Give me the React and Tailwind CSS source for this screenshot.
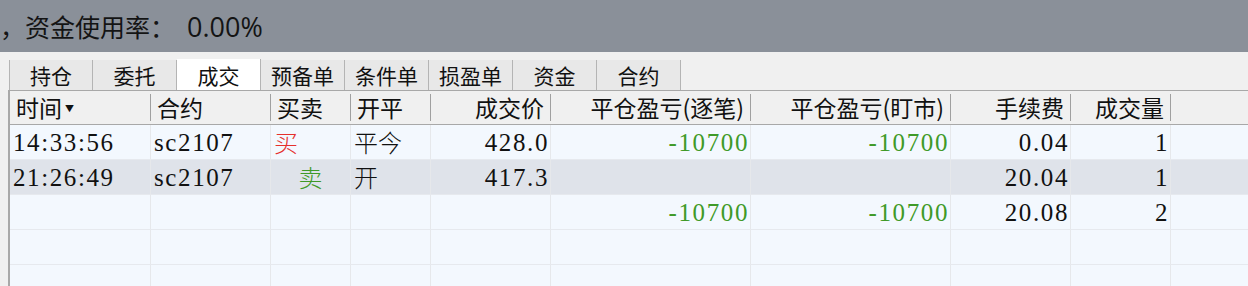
import React from "react";

const COLS = "grid grid-cols-[141px_120px_80px_80px_120px_200px_200px_120px_100px_1fr]";
const SANS = { fontFamily: '"Noto Sans CJK SC", "Noto Sans", sans-serif' };
const SERIF = { fontFamily: '"Liberation Serif", "Noto Sans CJK SC", serif' };

const tabs = ["持仓", "委托", "成交", "预备单", "条件单", "损盈单", "资金", "合约"];

const headers = [
  { t: "时间", a: "left", arrow: true },
  { t: "合约", a: "left" },
  { t: "买卖", a: "left" },
  { t: "开平", a: "left" },
  { t: "成交价", a: "right" },
  { t: "平仓盈亏(逐笔)", a: "right" },
  { t: "平仓盈亏(盯市)", a: "right" },
  { t: "手续费", a: "right" },
  { t: "成交量", a: "right" },
];

const GREEN = "text-[#3f9a28]";

const rows = [
  {
    bg: "bg-[#f3f8fe]",
    cells: [
      { t: "14:33:56", a: "left" },
      { t: "sc2107", a: "left" },
      { t: "买", a: "left", c: "text-[#e5302c]", cjk: true },
      { t: "平今", a: "left", cjk: true },
      { t: "428.0", a: "right" },
      { t: "-10700", a: "right", c: GREEN },
      { t: "-10700", a: "right", c: GREEN },
      { t: "0.04", a: "right" },
      { t: "1", a: "right" },
    ],
  },
  {
    bg: "bg-[#dfe3ea]",
    cells: [
      { t: "21:26:49", a: "left" },
      { t: "sc2107", a: "left" },
      { t: "卖", a: "center", c: "text-[#3f9a28]", cjk: true },
      { t: "开", a: "left", cjk: true },
      { t: "417.3", a: "right" },
      { t: "", a: "right" },
      { t: "", a: "right" },
      { t: "20.04", a: "right" },
      { t: "1", a: "right" },
    ],
  },
  {
    bg: "bg-[#f3f8fe]",
    cells: [
      { t: "", a: "left" },
      { t: "", a: "left" },
      { t: "", a: "left" },
      { t: "", a: "left" },
      { t: "", a: "right" },
      { t: "-10700", a: "right", c: GREEN },
      { t: "-10700", a: "right", c: GREEN },
      { t: "20.08", a: "right" },
      { t: "2", a: "right" },
    ],
  },
  { bg: "bg-[#f3f8fe]", cells: Array(9).fill({ t: "", a: "left" }) },
  { bg: "bg-[#f3f8fe]", cells: Array(9).fill({ t: "", a: "left" }) },
];

function alignCls(a) {
  if (a === "right") return "justify-end pr-[1px]";
  if (a === "center") return "justify-center";
  return "justify-start pl-[3px]";
}

export default function App() {
  return (
    <div className="w-[1248px] h-[286px] overflow-hidden bg-[#f0f0f0] text-[#111]">
      {/* top bar */}
      <div className="h-[52px] bg-[#8a9099] flex items-center whitespace-nowrap" style={SANS}>
        <span className="text-[25px] leading-none mt-[1px] text-[#141414]">
          ，资金使用率：
          <span
            className="ml-[12px] text-[27px]"
            style={{ fontFamily: '"Open Sans", "Noto Sans", sans-serif' }}
          >
            0.00%
          </span>
        </span>
      </div>

      {/* tabs */}
      <div className="h-[38px] pt-[7px] pl-[9px] flex">
        {tabs.map((t, i) => {
          const active = i === 2;
          return (
            <div
              key={t}
              className={
                "w-[84px] flex items-center justify-center text-[21px] leading-none border-r border-[#b4b4b4] " +
                (i === 0 ? "border-l " : "") +
                (active ? "bg-white h-[31px]" : "bg-[#e8e8e8] h-[30px] mt-[1px]")
              }
              style={SANS}
            >
              <span className="mt-[1px]">{t}</span>
            </div>
          );
        })}
      </div>

      {/* table */}
      <div className="ml-[8px] border-l-2 border-t border-[#a8a8a8]">
        {/* header */}
        <div className={COLS + " h-[34px] border-b border-[#a8a8a8] bg-[#f0f0f0]"} style={SANS}>
          {headers.map((h, i) => (
            <div
              key={i}
              className={
                "flex items-center border-r border-[#a0a0a0] my-[3px] " +
                (h.a === "right" ? "justify-end pr-[6px]" : "justify-start pl-[6px]")
              }
            >
              <span className="text-[23px] leading-none">{h.t}</span>
              {h.arrow && <span className="text-[9px] ml-[3px] mt-[2px]">▼</span>}
            </div>
          ))}
          <div />
        </div>
        {/* rows */}
        {rows.map((r, ri) => (
          <div key={ri} className={COLS + " h-[35px] border-b border-[#e6e9ee] " + r.bg} style={SERIF}>
            {r.cells.map((c, ci) => (
              <div
                key={ci}
                className={
                  "flex items-center border-r border-[#e6e8eb] leading-none " +
                  alignCls(c.a) +
                  " " +
                  (c.c || "") +
                  (c.cjk ? " text-[24px] font-light" : " text-[25px] tracking-[1.6px]")
                }
                style={c.cjk ? SANS : SERIF}
              >
                {c.t}
              </div>
            ))}
            <div />
          </div>
        ))}
      </div>
    </div>
  );
}
